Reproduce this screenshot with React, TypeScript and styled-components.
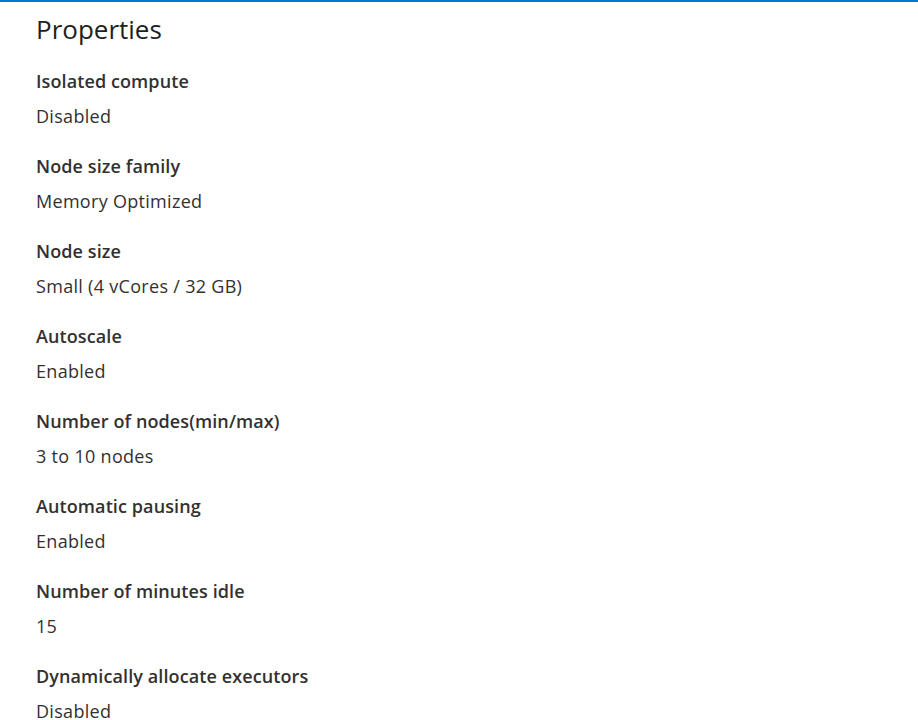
import React from "react";
import styled, { createGlobalStyle } from "styled-components";

const Global = createGlobalStyle`
  html, body { margin: 0; padding: 0; background: #fff; }
  body { font-family: "Open Sans", "Noto Sans", sans-serif; color: #323130; }
`;

const Page = styled.div`
  border-top: 2px solid #0078d4;
  padding: 11px 36px 0 36px;
  min-height: 718px;
  box-sizing: border-box;
`;

const Title = styled.h2`
  margin: 0 0 24px 0;
  font-size: 26px;
  line-height: 32px;
  font-weight: 400;
  color: #201f1e;
`;

const List = styled.dl`
  margin: 0;
  display: flex;
  flex-direction: column;
  gap: 26px;
`;

const Item = styled.div`
  display: flex;
  flex-direction: column;
  gap: 11px;
`;

const Label = styled.dt`
  font-size: 18px;
  line-height: 24px;
  font-weight: 600;
  color: #323130;
  letter-spacing: 0.1px;
`;

const Value = styled.dd`
  margin: 0;
  font-size: 18px;
  line-height: 24px;
  font-weight: 400;
  color: #323130;
  letter-spacing: 0.3px;
`;

const items: [string, string][] = [
  ["Isolated compute", "Disabled"],
  ["Node size family", "Memory Optimized"],
  ["Node size", "Small (4 vCores / 32 GB)"],
  ["Autoscale", "Enabled"],
  ["Number of nodes(min/max)", "3 to 10 nodes"],
  ["Automatic pausing", "Enabled"],
  ["Number of minutes idle", "15"],
  ["Dynamically allocate executors", "Disabled"],
];

export default function App() {
  return (
    <>
      <Global />
      <Page>
        <Title>Properties</Title>
        <List>
          {items.map(([l, v]) => (
            <Item key={l}>
              <Label>{l}</Label>
              <Value>{v}</Value>
            </Item>
          ))}
        </List>
      </Page>
    </>
  );
}
